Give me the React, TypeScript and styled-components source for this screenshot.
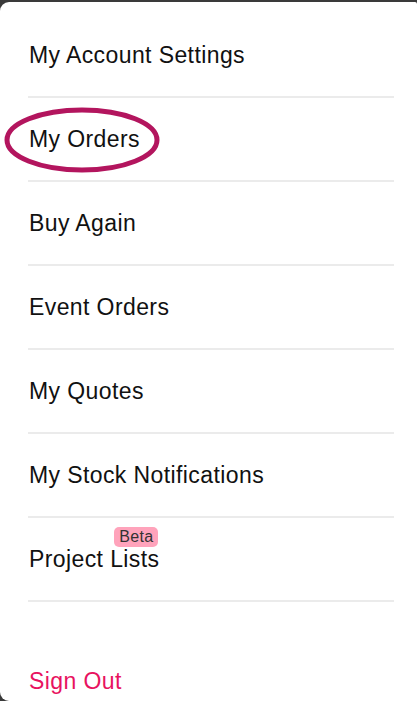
import styled, { createGlobalStyle } from "styled-components";

const GlobalStyle = createGlobalStyle`
  html, body {
    margin: 0;
    padding: 0;
    background: #3a3a3a;
  }
  body {
    font-family: "Liberation Sans", Arial, sans-serif;
  }
`;

const Screen = styled.div`
  height: 701px;
  padding-top: 2px;
  box-sizing: border-box;
  overflow: hidden;
`;

const Panel = styled.nav`
  height: 100%;
  background: #ffffff;
  border-radius: 9px 2px 0 9px;
  padding: 12px 23px 0 28px;
  box-sizing: border-box;
  display: flex;
  flex-direction: column;
`;

const Row = styled.a`
  position: relative;
  display: flex;
  align-items: center;
  height: 82px;
  border-bottom: 2px solid #ebebeb;
  color: #111111;
  font-size: 23px;
  letter-spacing: 0.4px;
  text-decoration: none;
  padding-left: 1px;
`;

const Label = styled.span`
  position: relative;
  display: inline-block;
`;

const Badge = styled.span`
  position: absolute;
  right: 1px;
  top: -19px;
  padding: 0 5px;
  border-radius: 5px;
  background: #ffa3bb;
  color: #333333;
  font-size: 16px;
  letter-spacing: 0.3px;
  line-height: 20px;
`;

const Highlight = styled.svg`
  position: absolute;
  left: -25px;
  top: 8px;
  pointer-events: none;
`;

const SignOut = styled.a`
  margin-top: auto;
  height: 33px;
  padding-left: 1px;
  display: flex;
  align-items: flex-start;
  color: #e8135f;
  font-size: 23px;
  letter-spacing: 0.4px;
  text-decoration: none;
`;

const items = [
  "My Account Settings",
  "My Orders",
  "Buy Again",
  "Event Orders",
  "My Quotes",
  "My Stock Notifications",
  "Project Lists",
];

export default function App() {
  return (
    <Screen>
      <GlobalStyle />
      <Panel>
        {items.map((item) => (
          <Row href="#" key={item}>
            <Label>
              {item}
              {item === "Project Lists" && <Badge>Beta</Badge>}
            </Label>
            {item === "My Orders" && (
              <Highlight width="160" height="68" viewBox="0 0 160 68">
                <ellipse cx="79" cy="34" rx="75" ry="30" fill="none" stroke="#b3155e" strokeWidth="5" />
              </Highlight>
            )}
          </Row>
        ))}
        <SignOut href="#">Sign Out</SignOut>
      </Panel>
    </Screen>
  );
}
